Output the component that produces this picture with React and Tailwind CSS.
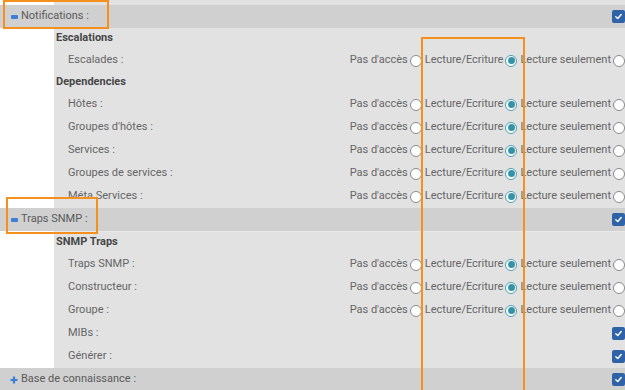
import React from 'react';

function Radio({ checked }) {
    return (
        <span className={"ml-[2px] inline-flex h-[12px] w-[12px] shrink-0 items-center justify-center rounded-full border bg-white " + (checked ? "border-[#4a9db0]" : "border-[#8a8a8a]")}>
            {checked ? <span className="h-[7px] w-[7px] rounded-full bg-[#3593a8]" /> : null}
        </span>
    );
}

function Check() {
    return (
        <span className="flex h-[13px] w-[13px] items-center justify-center rounded-[2px] bg-[#2f62a6]">
            <svg width="9" height="9" viewBox="0 0 10 10">
                <path d="M2 5.2 L4.2 7.2 L8 2.8" fill="none" stroke="white" strokeWidth="1.6" strokeLinecap="round" strokeLinejoin="round" />
            </svg>
        </span>
    );
}

function Header({ label, open }) {
    return (
        <div className="flex h-[23px] items-center justify-between bg-[#d0d0d0] pl-[10px]">
            <div className="flex items-center gap-[3px] text-[11px] text-[#5a5a5a]">
                {open ? (
                    <span className="ml-[1px] h-[4px] w-[7px] rounded-[1px] bg-[#3b7fd6]" />
                ) : (
                    <svg width="8" height="8" viewBox="0 0 8 8">
                        <path d="M4 0.5 V7.5 M0.5 4 H7.5" stroke="#3b7fd6" strokeWidth="2.2" />
                    </svg>
                )}
                <span>{label} :</span>
            </div>
            <Check />
        </div>
    );
}

function Title({ label }) {
    return (
        <div className="flex h-[21px] items-center pl-[2px] text-[11px] font-bold text-[#474747]">{label}</div>
    );
}

function Row({ label, kind }) {
    return (
        <div className="flex h-[23px] items-center justify-between pl-[14px] text-[11px] text-[#666]">
            <span>{label} :</span>
            {kind === 'check' ? (
                <Check />
            ) : (
                <div className="flex items-center gap-[3px]">
                    <span className="flex items-center">Pas d'accès<Radio /></span>
                    <span className="flex items-center">Lecture/Ecriture<Radio checked /></span>
                    <span className="flex items-center">Lecture seulement<Radio /></span>
                </div>
            )}
        </div>
    );
}

export default function App() {
    return (
        <div className="relative h-[390px] w-[625px] overflow-hidden bg-white font-['Roboto',sans-serif]">
            <div className="ml-[54px] h-[5px] bg-[#e2e2e2]" />
            <Header label="Notifications" open />
            <div className="ml-[54px] bg-[#e2e2e2]">
                <Title label="Escalations" />
                <Row label="Escalades" />
                <Title label="Dependencies" />
                <Row label="Hôtes" />
                <Row label="Groupes d'hôtes" />
                <Row label="Services" />
                <Row label="Groupes de services" />
                <Row label="Méta Services" />
            </div>
            <Header label="Traps SNMP" open />
            <div className="ml-[54px] border-t border-[#e9e9e9] bg-[#e2e2e2]">
                <Title label="SNMP Traps" />
                <Row label="Traps SNMP" />
                <Row label="Constructeur" />
                <Row label="Groupe" />
                <Row label="MIBs" kind="check" />
                <Row label="Générer" kind="check" />
            </div>
            <Header label="Base de connaissance" />

            {/* highlight boxes */}
            <div className="absolute left-[3px] top-0 h-[29px] w-[106px] border-2 border-[#f5901e]" />
            <div className="absolute left-[6px] top-[197px] h-[37px] w-[92px] border-2 border-[#f5901e]" />
            <div className="absolute left-[421px] top-[37px] h-[380px] w-[104px] border-2 border-[#f5901e]" />
        </div>
    );
}
